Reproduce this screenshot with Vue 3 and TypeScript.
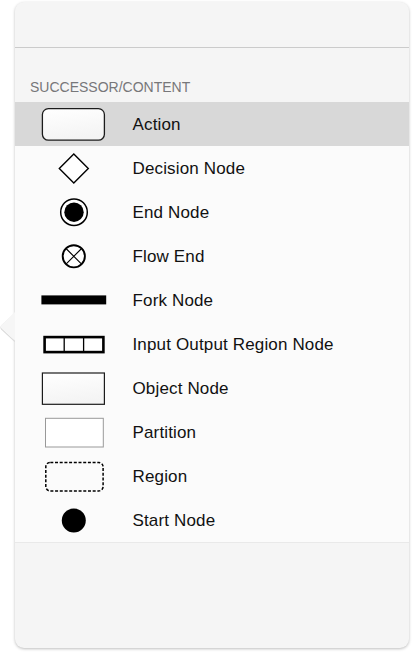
<script setup lang="ts">
interface NodeType {
  id: string
  label: string
}

const items: NodeType[] = [
  { id: 'action', label: 'Action' },
  { id: 'decision', label: 'Decision Node' },
  { id: 'end', label: 'End Node' },
  { id: 'flow-end', label: 'Flow End' },
  { id: 'fork', label: 'Fork Node' },
  { id: 'io-region', label: 'Input Output Region Node' },
  { id: 'object', label: 'Object Node' },
  { id: 'partition', label: 'Partition' },
  { id: 'region', label: 'Region' },
  { id: 'start', label: 'Start Node' },
]
const selected = 'action'
</script>

<template>
  <main class="stage">
    <section class="popover">
      <svg class="arrow" width="15" height="31" viewBox="0 0 15 31">
        <path class="arrow-shade" d="M15 1.5 L1.5 14 Q0.5 15.5 1.5 17 L15 29.5" />
        <path class="arrow-face" d="M15 0 L1.2 13.3 Q0 14.8 1.2 16 L15 28.5Z" />
      </svg>
      <header class="bar"></header>
      <h2 class="heading">SUCCESSOR/CONTENT</h2>
      <ul class="list">
        <li v-for="item in items" :key="item.id" class="row" :class="{ selected: item.id === selected }">
          <svg class="icon" width="118" height="44" viewBox="15 0 118 44" fill="none" stroke="#000">
            <defs>
              <linearGradient :id="'fade-' + item.id" x1="0" y1="0" x2="0.25" y2="1">
                <stop offset="0" stop-color="#fff" />
                <stop offset="1" stop-color="#f4f4f4" />
              </linearGradient>
            </defs>
            <rect v-if="item.id === 'action'" x="42.4" y="6.6" width="62" height="31.6" rx="6" stroke="#1b1b1b" stroke-width="1.3" fill="url(#fade-action)" />
            <path v-else-if="item.id === 'decision'" d="M73.8 8 L88.3 22.5 L73.8 37 L59.3 22.5Z" fill="#fff" stroke-width="1.4" />
            <template v-else-if="item.id === 'end'">
              <circle cx="74" cy="22.2" r="13.3" fill="#fff" stroke-width="1.5" />
              <circle cx="74" cy="22.2" r="9.7" fill="#000" stroke="none" />
            </template>
            <template v-else-if="item.id === 'flow-end'">
              <circle cx="73.8" cy="22.3" r="11.1" fill="#fff" stroke-width="1.9" />
              <path d="M66 14.5 L81.6 30.1 M81.6 14.5 L66 30.1" stroke-width="1.1" />
            </template>
            <rect v-else-if="item.id === 'fork'" x="41.4" y="17.4" width="64.8" height="9" fill="#000" stroke="none" />
            <template v-else-if="item.id === 'io-region'">
              <rect x="44.6" y="15.1" width="58.8" height="15" fill="#fff" stroke-width="2.6" />
              <path d="M64.2 15 V30 M83.6 15 V30" stroke-width="1.3" />
            </template>
            <rect v-else-if="item.id === 'object'" x="42.4" y="7" width="62" height="31.3" stroke="#1b1b1b" stroke-width="1.2" fill="url(#fade-object)" />
            <rect v-else-if="item.id === 'partition'" x="45.5" y="8.3" width="57.8" height="28.7" stroke="#999" stroke-width="1" fill="#fff" />
            <rect v-else-if="item.id === 'region'" x="45.8" y="8.4" width="57.3" height="28.6" rx="4.5" stroke-width="1.5" stroke-dasharray="3 1.7" />
            <circle v-else cx="73.8" cy="22.6" r="12" fill="#000" stroke="none" />
          </svg>
          <span class="label">{{ item.label }}</span>
        </li>
      </ul>
    </section>
  </main>
</template>

<style>
body {
  margin: 0;
  background: #fff;
}
</style>

<style scoped>
.stage {
  box-sizing: border-box;
  width: 412px;
  height: 654px;
  padding: 2px 3px 6px 15px;
  overflow: hidden;
  font-family: "Liberation Sans", Arial, sans-serif;
}
.popover {
  position: relative;
  width: 394px;
  height: 646px;
  border-radius: 9px;
  background: #f5f5f5;
  box-shadow: 0 1px 3px rgba(0, 0, 0, 0.26);
}
.arrow {
  position: absolute;
  left: -15px;
  top: 310px;
}
.arrow-face {
  fill: #f6f6f6;
}
.arrow-shade {
  fill: none;
  stroke: #dcdcdc;
  stroke-width: 1.2;
}
.bar {
  box-sizing: border-box;
  height: 46px;
  border-bottom: 1px solid #cbcbcb;
}
.heading {
  box-sizing: border-box;
  height: 54px;
  margin: 0;
  padding: 30px 0 0 15px;
  font-size: 14px;
  line-height: 18px;
  font-weight: 400;
  color: #77777a;
}
.list {
  box-sizing: border-box;
  height: 441px;
  margin: 0;
  padding: 0;
  list-style: none;
  background: #fbfbfb;
  border-bottom: 1px solid #e9e9e9;
}
.row {
  display: flex;
  align-items: center;
  height: 44px;
}
.row.selected {
  background: #d8d8d8;
}
.icon {
  display: block;
  flex: none;
}
.label {
  margin-left: -0.5px;
  padding-top: 2px;
  font-size: 17px;
  line-height: 20px;
  letter-spacing: 0.15px;
  color: #111;
  white-space: nowrap;
}
</style>
